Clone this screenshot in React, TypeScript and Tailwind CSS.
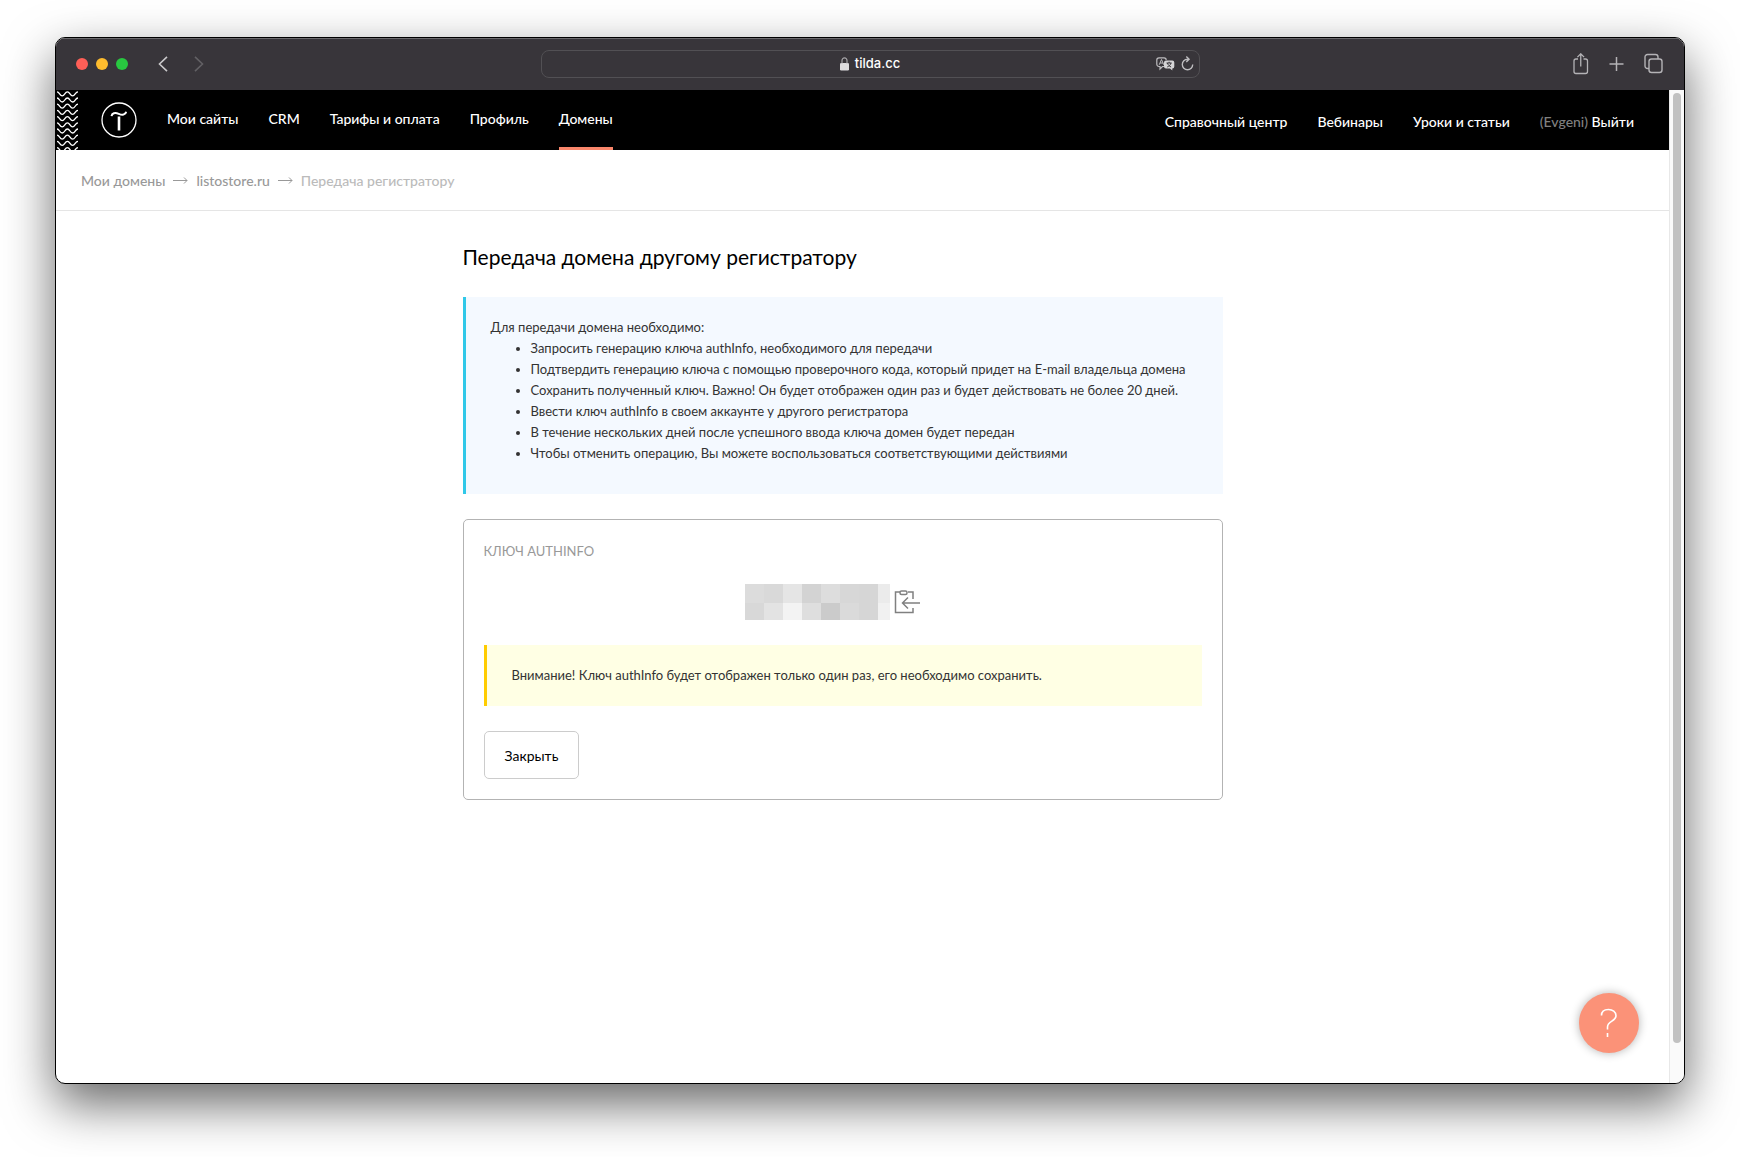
import React from 'react'

const steps = [
  'Запросить генерацию ключа authInfo, необходимого для передачи',
  'Подтвердить генерацию ключа с помощью проверочного кода, который придет на E-mail владельца домена',
  'Сохранить полученный ключ. Важно! Он будет отображен один раз и будет действовать не более 20 дней.',
  'Ввести ключ authInfo в своем аккаунте у другого регистратора',
  'В течение нескольких дней после успешного ввода ключа домен будет передан',
  'Чтобы отменить операцию, Вы можете воспользоваться соответствующими действиями',
]

const menu = ['Мои сайты', 'CRM', 'Тарифы и оплата', 'Профиль', 'Домены']
const links = ['Справочный центр', 'Вебинары', 'Уроки и статьи']

// hidden key, one shade per tile
const mosaic = [
  ['#dcdcdc', '#d9d9d9', '#e5e5e5', '#d3d3d3', '#dddddd', '#d7d7d7', '#d6d6d6', '#ebebeb'],
  ['#d8d8d8', '#e3e3e3', '#f3f3f3', '#dedede', '#cbcbcb', '#dadada', '#d6d6d6', '#f1f1f1'],
]

const Waves = () => (
  <svg className="absolute left-px top-px h-[59px] w-[21px]" fill="none" stroke="#fff" strokeWidth="1.3" aria-hidden="true">
    {Array.from({ length: 11 }, (_, i) => (
      <path key={i} transform={`translate(0 ${i * 6.2 - 0.5})`} d="M0 1.3c2.6 0 2.6 4 5.2 4s2.6-4 5.2-4 2.6 4 5.2 4 2.6-4 5.4-4" />
    ))}
  </svg>
)

const Logo = () => (
  <svg className="h-9 w-9" viewBox="0 0 36 36" fill="none" stroke="#fff" aria-hidden="true">
    <circle cx="18" cy="18" r="17" strokeWidth="1.3" />
    <path d="M10.5 14.200c.5-3 3.400-4 7.200-2.400 3.700 1.600 6.800 1.200 7.500-2" strokeWidth="2" />
    <path d="M18 14.500V28.500" strokeWidth="2.600" />
  </svg>
)

const Arrow = () => (
  <svg width="15" height="8" fill="none" stroke="currentColor" aria-hidden="true">
    <path d="M0 4.500h14M11 1.500l3 3-3 3" />
  </svg>
)

const Toolbar = () => (
  <div className="flex h-[52px] items-center bg-[#38353a] px-5 shadow-[inset_0_1px_0_#6b6a6d]">
    <div className="flex flex-1 items-center">
      <div className="flex gap-2">
        <span className="h-3 w-3 rounded-full bg-[#ff5f57]" />
        <span className="h-3 w-3 rounded-full bg-[#febc2e]" />
        <span className="h-3 w-3 rounded-full bg-[#28c840]" />
      </div>
      <button type="button" aria-label="Назад" className="ml-[30px]">
        <svg width="10" height="16" fill="none" stroke="#c9c8ca" strokeWidth="1.6"><path d="M9 .8 1.500 8 9 15.200" /></svg>
      </button>
      <button type="button" aria-label="Вперед" className="ml-[26px]">
        <svg width="10" height="16" fill="none" stroke="#626064" strokeWidth="1.6"><path d="M1 .8 8.500 8 1 15.200" /></svg>
      </button>
    </div>
    <div className="flex h-7 w-[41.5%] items-center rounded-lg border border-[#525054] px-[5px] font-['Inter',sans-serif] text-[13px] font-medium text-white">
      <div className="flex-1" />
      <div className="flex items-center gap-[6px]">
        <svg width="9" height="14" fill="none">
          <rect y="6" width="9" height="7.500" rx="1.200" fill="#dddcde" />
          <path d="M2 6.500V3.600a2.500 2.700 0 0 1 5 0v2.900" stroke="#a5a4a7" strokeWidth="1.200" />
        </svg>
        <span>tilda.cc</span>
      </div>
      <div className="flex flex-1 items-center justify-end gap-[6px]">
        <svg width="19" height="14" fill="none" aria-hidden="true">
          <path d="M8 9.500H6.500L4 12V9.500H3A2.200 2.200 0 0 1 .8 7.300V3A2.200 2.200 0 0 1 3 .8h5A2.200 2.200 0 0 1 10.200 3" stroke="#bdbcbf" strokeWidth="1.200" />
          <path d="m3.200 7.800 2.300-5.300 2.300 5.300M4 6h3" stroke="#bdbcbf" />
          <path d="M10 3.500h6.300a2 2 0 0 1 2 2v4a2 2 0 0 1-2 2v2l-2.300-2h-4a2 2 0 0 1-2-2v-4a2 2 0 0 1 2-2Z" fill="#d5d4d6" />
          <path d="M10.500 6h5.200M13.100 4.700V6M11.200 10c2-.8 3.400-2.200 3.700-4M11.400 6c.5 1.800 1.800 3.200 3.700 4" stroke="#38353a" />
        </svg>
        <button type="button" aria-label="Обновить">
          <svg width="13" height="16" fill="none" stroke="#bdbcbf" strokeWidth="1.400">
            <path d="M11.700 8.500a5.200 5.200 0 1 1-5.200-5.200h1.300M5.300.5l2.800 2.800-2.800 2.800" />
          </svg>
        </button>
      </div>
    </div>
    <div className="flex flex-1 items-center justify-end gap-[19px]">
      <button type="button" aria-label="Поделиться">
        <svg width="17" height="22" fill="none" stroke="#b4b3b6" strokeWidth="1.300">
          <path d="M5 6H3a2 2 0 0 0-2 2v10.500a2 2 0 0 0 2 2h9.500a2 2 0 0 0 2-2V8a2 2 0 0 0-2-2h-2M7.750 13.500V1M4.400 4.100 7.750.8l3.350 3.300" />
        </svg>
      </button>
      <button type="button" aria-label="Новая вкладка">
        <svg width="16" height="16" fill="none" stroke="#b4b3b6" strokeWidth="1.500"><path d="M7.500 1v14M.5 8h14" /></svg>
      </button>
      <button type="button" aria-label="Вкладки">
        <svg width="20" height="22" fill="none" stroke="#b4b3b6" strokeWidth="1.400">
          <rect x="5" y="6" width="13" height="13.500" rx="2.500" />
          <path d="M5 15.500H3.500a2.500 2.500 0 0 1-2.500-2.500V4a2.500 2.500 0 0 1 2.500-2.500h8A2.500 2.500 0 0 1 14 4v2" />
        </svg>
      </button>
    </div>
  </div>
)

const App = () => {
  return (
    <div className="flex min-h-screen flex-col bg-white px-[55px] pt-[37px] pb-[73px] font-['Lato','Open_Sans',sans-serif] text-black">
      <div className="flex flex-1 flex-col overflow-hidden rounded-[10px] border border-black bg-white shadow-[0_20px_50px_rgba(0,0,0,0.6)]">
        <Toolbar />
        <div className="flex flex-1">
          <div className="relative flex-1">
            <header className="relative flex h-[60px] items-stretch justify-between bg-black pl-[45px] pr-[35px] text-[14px] font-medium text-white">
              <Waves />
              <div className="flex items-center">
                <a href="#" aria-label="Tilda"><Logo /></a>
                <nav className="ml-[30px] flex h-full gap-[30px]">
                  {menu.map((item) => (
                    <a key={item} href="#" className={item === 'Домены' ? 'border-b-[3px] border-[#fa876b] leading-[58px]' : 'leading-[58px]'}>{item}</a>
                  ))}
                </nav>
              </div>
              <div className="flex items-center gap-[30px] pt-[2px]">
                {links.map((item) => (
                  <a key={item} href="#">{item}</a>
                ))}
                <span><span className="text-[#808080]">(Evgeni)</span> <a href="#">Выйти</a></span>
              </div>
            </header>
            <div className="flex h-[61px] items-center gap-2 border-b border-[#e5e5e5] px-[25px] text-[14px] font-medium text-[#999]">
              <a href="#">Мои домены</a>
              <Arrow />
              <a href="#">listostore.ru</a>
              <Arrow />
              <span className="text-[#bbb]">Передача регистратору</span>
            </div>
            <div className="mx-auto max-w-[1200px]">
              <main className="ml-[200px] max-w-[760px]">
                <h1 className="pt-[31px] text-[21px] leading-[30px]">Передача домена другому регистратору</h1>
                <div className="mt-[25px] border-l-[3px] border-[#30c8e8] bg-[#f4f9ff] px-[25px] pt-5 pb-[30px] text-[13px] leading-[21px] text-[#333]">
                  <p>Для передачи домена необходимо:</p>
                  <ul className="list-disc pl-10">
                    {steps.map((step) => (
                      <li key={step}>{step}</li>
                    ))}
                  </ul>
                </div>
                <div className="mt-[25px] rounded-[5px] border border-[#b3b3b3] p-5">
                  <h2 className="text-[13px] leading-[22px] text-[#999]">КЛЮЧ AUTHINFO</h2>
                  <div className="mt-[22px] flex items-center justify-center gap-1 pr-5">
                    <div className="flex h-9 w-[145px] flex-col overflow-hidden">
                      {mosaic.map((row, i) => (
                        <div key={i} className="flex h-[19px] shrink-0">
                          {row.map((shade, j) => (
                            <span key={j} className="w-[19px] shrink-0" style={{ background: shade }} />
                          ))}
                        </div>
                      ))}
                    </div>
                    <button type="button" aria-label="Скопировать">
                      <svg width="26" height="24" fill="none" stroke="#808080" strokeWidth="1.500">
                        <path d="M6 2H1.500v20.500H19V18M14 2h5v7" />
                        <rect x="6" y="1" width="7" height="3.500" rx="1.500" />
                        <path d="M26 13H8.500M14 7.500 8.500 13l5.500 5.500" />
                      </svg>
                    </button>
                  </div>
                  <p className="mt-[25px] border-l-[3px] border-[#fc0] bg-[#ffffe4] px-[25px] py-5 text-[13px] leading-[21px] text-[#333]">
                    Внимание! Ключ authInfo будет отображен только один раз, его необходимо сохранить.
                  </p>
                  <button type="button" className="mt-[25px] h-12 rounded-[5px] border border-[#ccc] px-5 text-[14px]">Закрыть</button>
                </div>
              </main>
            </div>
            <button type="button" aria-label="Помощь" className="absolute right-[30px] bottom-[30px] flex h-[60px] w-[60px] items-center justify-center rounded-full bg-[#fb9278] shadow-[0_0_10px_rgba(0,0,0,0.3)]">
              <svg width="18" height="30" fill="none" stroke="#fff" strokeWidth="1.600">
                <path d="M1.500 7.500C1.500 3.500 4.500 1.500 8.500 1.500S16 4 16 7.800c0 5.700-8.500 5-8.500 11.200v2.500M7.500 25v4" />
              </svg>
            </button>
          </div>
          <div className="flex w-[15px] justify-center border-l border-[#e8e8e8] bg-[#fafafa] pt-[3px]">
            <div className="h-[96%] w-2 rounded-full bg-[#c1c1c1]" />
          </div>
        </div>
      </div>
    </div>
  )
}

export default App
